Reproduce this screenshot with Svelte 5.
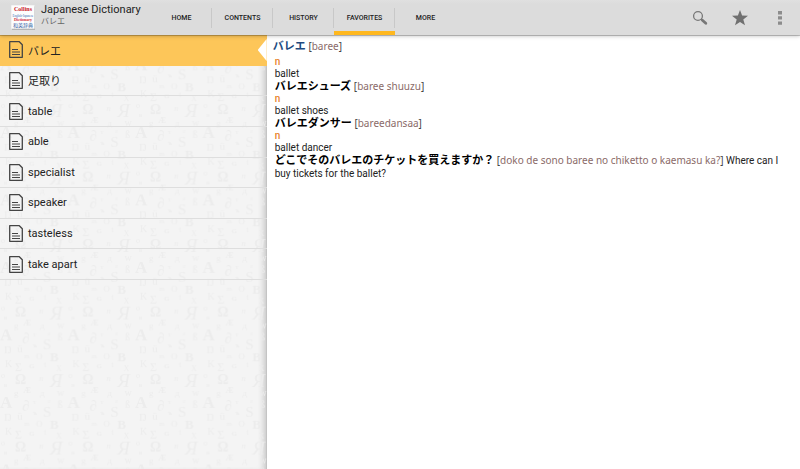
<script>
    const tabs = ["Home", "Contents", "History", "Favorites", "More"];
    const words = ["バレエ", "足取り", "table", "able", "specialist", "speaker", "tasteless", "take apart"];

    const entries = [
        { word: "バレエ", reading: "baree", type: "n", meaning: "ballet" },
        { word: "バレエシューズ", reading: "baree shuuzu", type: "n", meaning: "ballet shoes" },
        { word: "バレエダンサー", reading: "bareedansaa", type: "n", meaning: "ballet dancer" }
    ];

    let tab = $state("Favorites");
    let selected = $state(0);

    // wallpaper tile: [char, x, baseline, size, style]
    const tile = 67.5;
    const glyphs = [
        ["A", 0, 13.5, 17, "bold"],
        ["∂", 22, 17, 15, ""],
        ["т", 33, 10, 7, ""],
        ["ε", 48, 9, 6, ""],
        ["ß", 57.5, 14, 10, ""],
        ["S", 43, 22.5, 15, ""],
        ["ъ", 33, 21, 7, "bold"],
        ["Ŋ", 4, 27, 11, ""],
        ["ü", 17, 26, 11, ""],
        ["m", 24, 32, 7, ""],
        ["O", 36, 33, 9, ""],
        ["B", 50, 35, 13, "bold"],
        ["K", 5, 41, 10, ""],
        ["t", 44, 41, 8, ""],
        ["G", 29, 42, 7, "bold"],
        ["Σ", 15, 45, 12, ""],
        ["X", 56, 45, 8, ""],
        ["Ω", 15, 58, 14, "bold"],
        ["n", 39, 54.5, 9, "italic"],
        ["Я", 50, 61, 19, "italic"],
        ["o", 1, 52, 8, ""],
        ["в", 4, 61, 7, ""],
        ["Æ", 23, 67, 8, "bold"],
        ["g", 14, 69, 9, ""],
        ["д", 40, 69, 9, ""],
        ["w", 57, 69.5, 10, ""]
    ];
</script>

<div class="app">
    <header>
        <svg class="logo" viewBox="0 0 24 25" aria-hidden="true">
            <rect x="1" y="1.4" width="23" height="23.6" fill="#999" opacity=".6" />
            <rect x=".3" y=".3" width="23.2" height="23.4" fill="#fdfdfd" />
            <text x="12" y="6.4" font-size="6" font-weight="bold" fill="#c8141f">Collins</text>
            <text x="12" y="11.6" font-size="3" fill="#2f68b0">English-Japanese</text>
            <text x="12" y="16.4" font-size="4" font-weight="bold" fill="#d0303a">Dictionary</text>
            <text class="kanji" x="12" y="22" font-size="5" fill="#2c58a0">和英辞典</text>
        </svg>
        <div class="titles">
            <h1>Japanese Dictionary</h1>
            <p>バレエ</p>
        </div>
        <nav>
            {#each tabs as name}
                <button class="tab" class:active={tab === name} onclick={() => (tab = name)}>{name}</button>
            {/each}
        </nav>
        <div class="actions">
            <button aria-label="Search">
                <svg viewBox="0 0 16 16">
                    <circle cx="6" cy="6" r="4.4" fill="none" stroke="#777" stroke-width="1.3" />
                    <path d="M9 9l1.4 1.4" stroke="#777" stroke-width="1.4" />
                    <path d="M10.4 10.2l3.4 3" stroke="#777" stroke-width="2.8" stroke-linecap="round" />
                </svg>
            </button>
            <button aria-label="Favorite">
                <svg viewBox="0 0 16 16">
                    <path d="M8 0l2.1 5.6 5.9.2-4.7 3.7 1.7 5.8L8 12l-5 3.3 1.7-5.8L0 5.8l5.9-.2z" fill="#707070" />
                </svg>
            </button>
            <button aria-label="More options">
                <svg viewBox="0 0 16 16">
                    <path d="M6 1h4v3.4H6zM6 6.2h4v3.4H6zM6 11.4h4v3.4H6z" fill="#8c8c8c" />
                </svg>
            </button>
        </div>
    </header>

    <div class="columns">
        <aside>
            <svg class="wallpaper" aria-hidden="true">
                <defs>
                    <pattern id="letters" width={tile} height={tile} patternUnits="userSpaceOnUse" patternTransform="translate(0 21.5)">
                        {#each [0, -tile] as shift}
                            {#each glyphs as [char, x, y, size, style]}
                                <text {x} y={y + shift} font-size={size} class={style}>{char}</text>
                            {/each}
                        {/each}
                    </pattern>
                </defs>
                <rect width="100%" height="100%" fill="url(#letters)" />
            </svg>
            <ul>
                {#each words as word, i}
                    <li>
                        <button class="row" class:selected={selected === i} onclick={() => (selected = i)}>
                            <svg viewBox="0 0 14 17" aria-hidden="true">
                                <path d="M.7.7h9.6l3 3v12.6H.7z" fill="none" stroke="currentColor" stroke-width="1.3" stroke-linejoin="round" />
                                <path d="M3 8.5h6M3 11h8M3 13.5h8" stroke="currentColor" stroke-width="1" />
                            </svg>
                            {word}
                        </button>
                    </li>
                {/each}
            </ul>
        </aside>

        <main>
            {#each entries as entry, i}
                <h2 class:headword={i === 0}>{entry.word} <span class="reading">[<i>{entry.reading}</i>]</span></h2>
                <p class="type">{entry.type}</p>
                <p>{entry.meaning}</p>
            {/each}
            <p class="sentence">
                <b>どこでそのバレエのチケットを買えますか？</b>
                <span class="reading">[<i>doko de sono baree no chiketto o kaemasu ka?</i>]</span>
                Where can I buy tickets for the ballet?
            </p>
        </main>
    </div>
</div>

<style>
    :global(body) {
        margin: 0;
        background: #fff;
    }

    .app {
        display: flex;
        flex-direction: column;
        min-height: 100vh;
        font-family: Roboto, "Noto Sans CJK JP", sans-serif;
        color: #222;
    }

    h1, h2, p, ul {
        margin: 0;
        padding: 0;
        font-weight: normal;
    }

    button {
        margin: 0;
        padding: 0;
        border: 0;
        background: none;
        font: inherit;
        color: inherit;
        cursor: pointer;
    }

    header {
        position: relative;
        z-index: 2;
        display: flex;
        height: 35px;
        padding-left: 11px;
        background: linear-gradient(#e0e0e0, #dcdcdc 4px);
        box-shadow: 0 1px 0 rgba(0, 0, 0, 0.2), 0 1px 4px rgba(0, 0, 0, 0.25);
    }

    .logo {
        width: 24px;
        height: 25px;
        margin-top: 5px;
        font-family: "Liberation Serif", serif;
        text-anchor: middle;
    }

    .kanji {
        font-family: "Noto Sans CJK JP", sans-serif;
    }

    .titles {
        width: 110px;
        margin-left: 6px;
        padding-top: 3px;
        white-space: nowrap;
    }

    h1 {
        font-size: 11px;
        line-height: 14px;
    }

    .titles p {
        font-size: 8px;
        line-height: 9px;
        color: #666;
    }

    nav {
        display: flex;
    }

    .tab {
        width: 61px;
        border-bottom: 4px solid transparent;
        padding-top: 4px;
        background: linear-gradient(#c8c8c8, #c8c8c8) right 8px / 1px 20px no-repeat;
        font-size: 7px;
        font-weight: 500;
        text-transform: uppercase;
    }

    .tab:last-child {
        background: none;
    }

    .tab.active {
        border-bottom-color: #ffb81f;
    }

    .actions {
        display: flex;
        margin-left: auto;
    }

    .actions button {
        display: grid;
        place-items: center;
        width: 40px;
    }

    .actions svg {
        width: 16px;
        height: 16px;
    }

    .columns {
        flex: 1;
        display: grid;
        grid-template-columns: 1fr 2fr;
    }

    aside {
        position: relative;
        background: #f4f4f4;
        box-shadow: inset -1px 0 #c4c4c4, inset -7px 0 6px -4px rgba(0, 0, 0, 0.2);
    }

    .wallpaper {
        position: absolute;
        width: 100%;
        height: 100%;
        fill: #ececec;
        font-family: "Liberation Serif", serif;
    }

    .bold {
        font-weight: bold;
    }

    .italic {
        font-style: italic;
    }

    ul {
        position: relative;
        display: grid;
        grid-template-rows: repeat(8, 1fr);
        height: 245px;
        list-style: none;
    }

    li {
        display: flex;
    }

    .row {
        position: relative;
        flex: 1;
        display: flex;
        align-items: center;
        gap: 5px;
        padding-left: 9px;
        border-bottom: 1px solid #dedede;
        font-size: 11px;
        text-align: left;
    }

    .row svg {
        width: 14px;
        height: 17px;
        color: #444;
    }

    .row.selected {
        background: #fdc659;
        border-bottom-color: #fdc659;
    }

    .row.selected::after {
        content: "";
        position: absolute;
        right: 0;
        top: 4px;
        width: 9px;
        height: 22px;
        background: #fff;
        clip-path: polygon(100% 0, 0 50%, 100% 100%);
    }

    main {
        padding: 5px 14px 8px 8px;
        font-size: 10px;
        line-height: 12px;
    }

    h2 {
        font-size: 11px;
        font-weight: bold;
        line-height: 13px;
        color: #000;
    }

    h2.headword {
        margin: 0 0 3px -2px;
        color: #204a80;
    }

    .reading {
        font-family: "Noto Sans", sans-serif;
        font-size: 10px;
        font-weight: normal;
        color: #444;
    }

    .reading i {
        font-style: normal;
        color: #8a6a68;
    }

    .type {
        color: #e8832a;
        font-weight: 500;
    }

    .sentence {
        line-height: 13px;
    }

    .sentence b {
        font-size: 11px;
        color: #000;
    }
</style>
